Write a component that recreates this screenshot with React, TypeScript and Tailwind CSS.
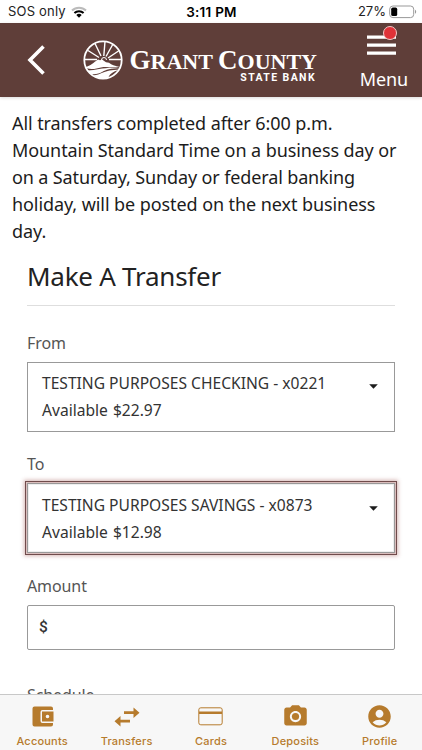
import { MdAccountCircle, MdCameraAlt } from 'react-icons/md';

const accounts = {
    from: { name: 'TESTING PURPOSES CHECKING - x0221', available: '$22.97' },
    to: { name: 'TESTING PURPOSES SAVINGS - x0873', available: '$12.98' },
};

const tabs = [
    { label: 'Accounts', icon: <WalletIcon /> },
    { label: 'Transfers', icon: <TransferIcon /> },
    { label: 'Cards', icon: <CardIcon /> },
    { label: 'Deposits', icon: <MdCameraAlt className="w-[27px] h-[27px]" /> },
    { label: 'Profile', icon: <MdAccountCircle className="w-[27px] h-[27px]" /> },
];

export default function App() {
    return (
        <div className="w-full h-[750px] flex flex-col overflow-hidden bg-white font-['Noto_Sans',sans-serif]">
            <StatusBar />
            <Header />

            <main className="flex-1 min-h-0 overflow-hidden">
                <p className="pl-3 pt-[13px] text-[18px] leading-[27px] tracking-[-0.08px] text-[#1c1c1c] whitespace-nowrap">
                    All transfers completed after 6:00 p.m.<br />
                    Mountain Standard Time on a business day or<br />
                    <span className="tracking-[-0.13px]">on a Saturday, Sunday or federal banking</span><br />
                    holiday, will be posted on the next business<br />
                    day.
                </p>

                <div className="px-[27px]">
                    <h1 className="h-[61px] pt-[12px] text-[26px] leading-[38px] tracking-[-0.25px] text-[#222] border-b border-[#dedede]">Make A Transfer</h1>

                    <label className="block mt-[25px] text-[16px] leading-6 tracking-[-0.1px] text-[#555]">From</label>
                    <AccountSelect account={accounts.from} />

                    <label className="block mt-5 text-[16px] leading-6 tracking-[-0.1px] text-[#555]">To</label>
                    <AccountSelect account={accounts.to} focused />

                    <label className="block mt-[21px] text-[16px] leading-6 tracking-[-0.1px] text-[#555]">Amount</label>
                    <div className="mt-[7px] h-[45px] pl-[11px] flex items-center border border-[#999] rounded-[2px] font-['Roboto',sans-serif] text-[15.5px] font-medium text-[#333]">$</div>

                    <label className="block mt-[33px] text-[16px] leading-6 tracking-[-0.1px] text-[#555]">Schedule</label>
                </div>
            </main>

            <nav className="h-14 shrink-0 grid grid-cols-5 bg-[#f7f7f7] border-t border-[#c8c8c8] font-['Inter',sans-serif] text-[#b67b2d]">
                {tabs.map(tab => (
                    <div key={tab.label} className="flex flex-col items-center pt-2">
                        <div className="h-[27px] flex items-center justify-center">{tab.icon}</div>
                        <span className="mt-1 text-[11px] leading-[14px] font-medium tracking-[0.2px]">{tab.label}</span>
                    </div>
                ))}
            </nav>
        </div>
    );
}

function StatusBar() {
    return (
        <div className="h-[23px] shrink-0 grid grid-cols-3 items-center pt-px pl-2 pr-[5px] font-['Inter',sans-serif] text-[13px] text-[#222]">
            <div className="flex items-center gap-[5px]">
                <span className="text-[13px] tracking-[0.2px]">SOS only</span>
                <svg className="w-4 h-3" viewBox="0 0 16 12" fill="none">
                    <path d="M1 4.5a10 10 0 0 1 14 0" stroke="#bbb" strokeWidth="2" />
                    <path d="M3.4 7a6.6 6.6 0 0 1 9.2 0" stroke="#000" strokeWidth="2" />
                    <path d="M8 11.8 5.3 9.1a3.9 3.9 0 0 1 5.4 0z" fill="#000" />
                </svg>
            </div>
            <span className="-ml-[2px] text-center text-[13.5px] font-semibold tracking-[0.25px] text-black whitespace-nowrap">3:11 PM</span>
            <div className="flex items-center justify-end gap-[3px]">
                <span>27%</span>
                <svg className="w-[28px] h-[14px]" viewBox="0 0 28 14">
                    <rect x="0.7" y="1" width="24" height="11.6" rx="3.2" fill="none" stroke="#999" strokeWidth="1" />
                    <rect x="2.2" y="2.6" width="6" height="8.4" rx="1.6" fill="#000" />
                    <path d="M26 4.8c1.6.6 1.6 3.4 0 4z" fill="#999" />
                </svg>
            </div>
        </div>
    );
}

function Header() {
    return (
        <header className="h-[74px] shrink-0 flex bg-[#5f3e39] text-white shadow-[0_1px_3px_rgba(0,0,0,0.15)]">
            <svg className="ml-[26px] mt-[22px] w-5 h-[30px]" viewBox="0 0 20 30" fill="none" stroke="#fff" strokeWidth="3.6">
                <path d="M17.5 1.5 4 15l13.5 13.5" />
            </svg>
            <div className="ml-[37px] mt-[17px] flex">
                <Emblem />
                <div className="ml-[6px] pt-[9px] w-[188px] flex flex-col items-end">
                    <div className="font-['Liberation_Serif',serif] font-bold text-[22px] leading-[22px] whitespace-nowrap">
                        <span className="text-[27px]">G</span>RANT <span className="text-[27px]">C</span>OUNTY
                    </div>
                    <div className="mr-[1px] font-['Roboto',sans-serif] font-bold text-[10.5px] leading-[10px] tracking-[1.4px] whitespace-nowrap">STATE BANK</div>
                </div>
            </div>
            <div className="relative ml-auto mr-[14px] flex flex-col items-center">
                <svg className="mt-[12px] mr-[4px] w-[29px] h-[20px]" viewBox="0 0 29 20" fill="#fff">
                    <path d="M0 .5h29v3.2H0zM0 8.6h29v3.2H0zM0 16.6h29v3.2H0z" />
                </svg>
                <span className="absolute left-[23px] top-[3px] w-[14px] h-[14px] rounded-full bg-[#e03238] border border-[#f4c8c8]" />
                <span className="mt-[11px] text-[18px] leading-[26px] tracking-[-0.1px]">Menu</span>
            </div>
        </header>
    );
}

function Emblem() {
    return (
        <svg className="w-[40px] h-[40px]" viewBox="0 0 40 40" fill="none">
            <circle cx="20" cy="20" r="18.7" stroke="#fff" strokeWidth="1.8" />
            <path d="M2 19.5h12M5 10.5l11 7M12 3.5 18 16M22 1.5 20.8 16M30 4 23 16.5M35.5 11 25 18M38 19.5H26" stroke="#fff" strokeWidth="1.4" />
            <path d="M18.5 20a2.5 2.5 0 0 1 5 0" stroke="#fff" strokeWidth="1" />
            <path d="M2.5 27c5-1 8-4.5 12.500-7.500l2 .8 2-.8 4 2.700 3 .5c4 3 6 3 10.500 4-7 1.500-13-.5-18.500.8-5 1.200-9.500 2.500-15 .5z" fill="#fff" />
            <path d="M4.5 30.5c10-.2 15-3.5 33-2.500-10 .3-15 1.800-18 3.800-3 2-8.500 3-12 2z" fill="#fff" />
            <path d="M10.500 35.500c7-.5 10-5.500 26-6-7 2.500-10 4.500-11.500 9-5 1-10 .2-14.500-3z" fill="#fff" />
        </svg>
    );
}

function AccountSelect({ account, focused }: { account: { name: string, available: string }, focused?: boolean }) {
    return (
        <div className={`mt-[7px] h-[70px] pl-[14px] pr-[16px] flex justify-between border border-[#999] text-[15.6px] leading-[27px] text-[#333] whitespace-nowrap ${focused ? 'pt-[8px] outline outline-1 outline-offset-1 outline-[#704b4b] shadow-[0_0_4px_3px_rgba(150,70,65,0.4),inset_0_0_0_1px_#eee]' : 'pt-[7px]'}`}>
            <div>
                <div>{account.name}</div>
                <div>Available <span className="ml-px">{account.available}</span></div>
            </div>
            <svg className="mt-[14px] w-[9px] h-[5px]" viewBox="0 0 9 5" fill="#1c1c1c">
                <path d="M.2.2h8.6L4.5 4.8z" />
            </svg>
        </div>
    );
}

function WalletIcon() {
    return (
        <svg className="ml-[2px] w-[22px] h-[21px]" viewBox="0 0 22 21" fill="currentColor">
            <path d="M2.5.5H19a2 2 0 0 1 2 2V4H10.500a2 2 0 0 0-2 2v9a2 2 0 0 0 2 2H21v1.500a2 2 0 0 1-2 2H2.500a2 2 0 0 1-2-2v-16a2 2 0 0 1 2-2z" />
            <path fillRule="evenodd" d="M10 5.500h11.500v10H10zM15.500 8.700a1.800 1.800 0 1 0 0 3.600 1.800 1.800 0 0 0 0-3.600z" />
        </svg>
    );
}

function TransferIcon() {
    return (
        <svg className="w-[26px] h-[20px]" viewBox="0 0 26 20" fill="currentColor">
            <path d="M10 4.200h9.500V.5l6 5.200-6 5.200V7H10zM16 12.700H6.500V9L.5 14.200l6 5.200v-3.900H16z" />
        </svg>
    );
}

function CardIcon() {
    return (
        <svg className="w-[25px] h-[19px]" viewBox="0 0 25 19">
            <rect x="0.8" y="0.8" width="23.4" height="17" rx="2" fill="none" stroke="currentColor" strokeWidth="1" />
            <path d="M1 4.500h23v2.500H1z" fill="currentColor" />
        </svg>
    );
}
